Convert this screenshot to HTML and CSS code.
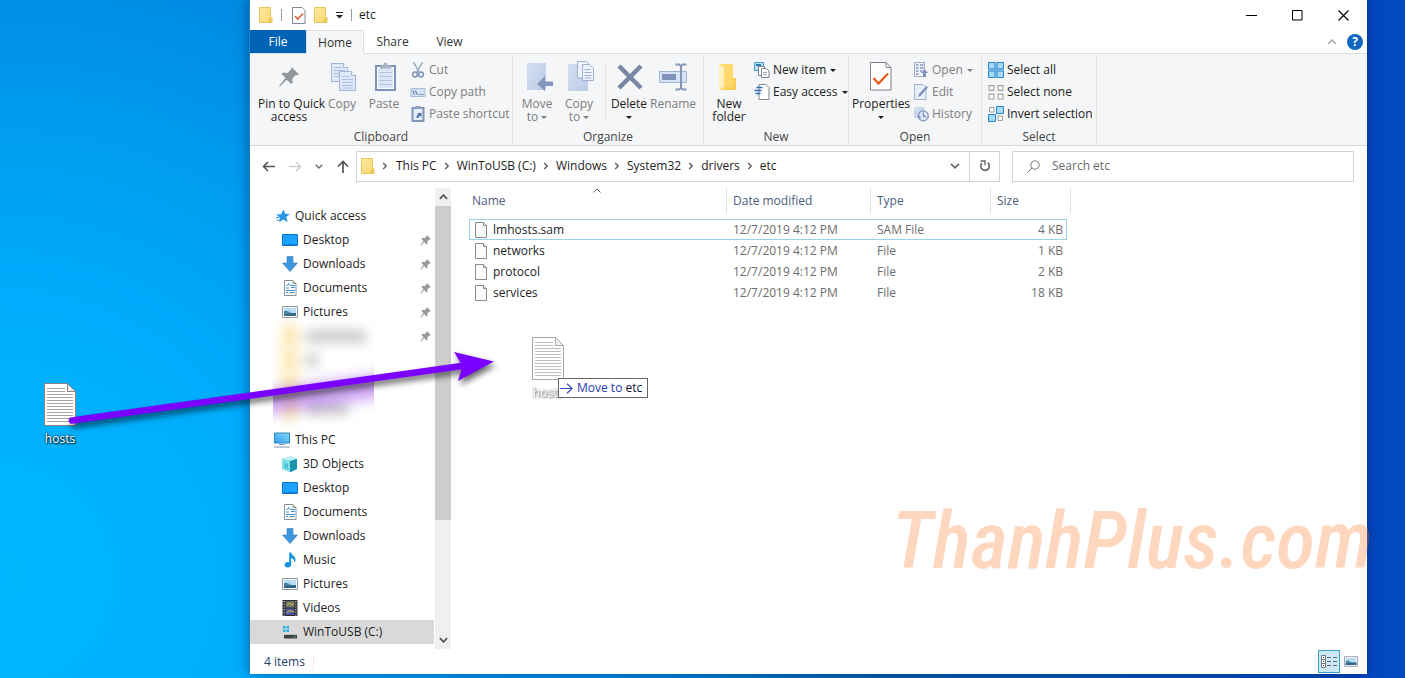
FILE: index.html
```html
<!DOCTYPE html>
<html lang="en">
<head>
<meta charset="utf-8">
<title>etc</title>
<meta name="viewport" content="width=device-width, initial-scale=1">
<link rel="stylesheet" href="styles.css">
</head>
<body>
<svg class="defs" aria-hidden="true">
  <defs>
    <linearGradient id="gFolder" x1="0" y1="0" x2="1" y2="1"><stop offset="0" stop-color="#ffeaa5"/><stop offset="1" stop-color="#fbd768"/></linearGradient>
    <linearGradient id="gBlue" x1="0" y1="0" x2="1" y2="1"><stop offset="0" stop-color="#1a9cff"/><stop offset="1" stop-color="#1aa8ff"/></linearGradient>
    <linearGradient id="gPale" x1="0" y1="0" x2="1" y2="1"><stop offset="0" stop-color="#d3dff2"/><stop offset="1" stop-color="#bccce6"/></linearGradient>
    <linearGradient id="gScreen" x1="0" y1="1" x2="1" y2="0"><stop offset="0" stop-color="#2f9fe8"/><stop offset="1" stop-color="#86dbfb"/></linearGradient>
  </defs>
  <symbol id="folder" viewBox="0 0 14 16"><path d="M.5.5h11v10h1.500v5H.5z" fill="url(#gFolder)" stroke="#e9c75f"/><path d="M11 11.500v4" stroke="#d9ae3c"/></symbol>
  <symbol id="pin" viewBox="0 0 20 20"><path d="M12.500 0 20 7.500l-2 .8-1-.6-3.600 3.800.2 4.300-1.500 1.300-4.300-4.300L1 19.600l-1-.4L6.500 11 2.600 7l1.400-1.400 4.500.3 3.700-3.600z" fill="#8f979c"/></symbol>
  <symbol id="page" viewBox="0 0 12 16"><path d="M.5.500h8l3 3v12H.5z" fill="#fbfbfb" stroke="#868b90"/><path d="M8.500.500v3h3" fill="#e6e6e6" stroke="#868b90"/></symbol>
  <symbol id="notes" viewBox="0 0 32 43"><path d="M.5.500h23l8 8v34H.5z" fill="#fff" stroke="#8d7f7a"/><path d="M23.500.500v8h8z" fill="#e9eef2" stroke="#8d7f7a"/><path d="M3 5.500h18M3 8.500h18M3 11.500h26M3 14.500h26M3 17.500h26M3 20.500h26M3 23.500h26M3 26.500h26M3 29.500h26M3 32.500h26M3 35.500h26M3 38.500h26" stroke="#a2a2a2"/></symbol>
  <symbol id="desktop" viewBox="0 0 16 12"><path d="M.5.500h15v11H.5z" fill="url(#gBlue)" stroke="#1173c7"/><path d="M2 10.500h12" stroke="#0c5ea8" stroke-dasharray="1 1"/></symbol>
  <symbol id="down" viewBox="0 0 16 16"><path d="M5 .5h6V7h4.500L8 15.500.500 7H5z" fill="#3f97de" stroke="#2b7cc0" stroke-width=".6"/></symbol>
  <symbol id="doc" viewBox="0 0 14 16"><path d="M1.500.500h8.500l3 3v12H1.500z" fill="#fff" stroke="#8b949c"/><path d="M10 .5v3h3" fill="none" stroke="#8b949c"/><path d="M3.500 5.500h1l1-2 1 2h1M3 8h3M8 5.500h4M8 7.500h4M3 10.500h9M3 12.500h2M6.500 12.500h5" stroke="#3e8fc7" fill="none"/></symbol>
  <symbol id="pics" viewBox="0 0 16 12"><path d="M.5.500h15v11H.5z" fill="#fff" stroke="#8b949c"/><path d="M2 2h12v8H2z" fill="#b5def5"/><path d="M2 5c3-1 5 1 7 2l5 0v3H2z" fill="#4d86a3"/><path d="M2 8l12-1v3H2z" fill="#2f6687"/></symbol>
  <symbol id="star" viewBox="0 0 14 14"><path d="M7.500.500 9.200 4.800 13.800 5 10.300 8l1.500 5-4.500-2.500L3 13.300l1-4.600L0 5.600l5-.4z" fill="#2a96e8"/><path d="M0 8.500h3M.5 11h3" stroke="#2a96e8"/></symbol>
  <symbol id="pc" viewBox="0 0 16 15"><path d="M.5.500h15v10H.5z" fill="url(#gScreen)" stroke="#3186bd"/><path d="M5 12h6M0 14.500h16" stroke="#7d9bb0"/></symbol>
  <symbol id="cube" viewBox="0 0 16 16"><path d="M0 3 9 .5l6 2.500v10l-6 3-9-3z" fill="#2fb4c9"/><path d="M0 3l8 2v11l-8-3z" fill="#7de0e8"/><path d="M0 3 9 .5l6 2.500-7 2z" fill="#bff3f5"/><path d="M8 5l7-2v10l-7 3z" fill="#1c93ad"/><path d="M2.500 7 6 8v5l-3.500-1z" fill="#4bc6d6"/></symbol>
  <symbol id="music" viewBox="0 0 12 16"><path d="M5.200.500h2c.3 3 4.300 3.500 4.300 7 0 1.500-.6 2.500-1.300 3.300.4-2.800-1-4.300-3-4.800v6.500c0 2-1.600 3-3.500 3-2 0-3.200-1.300-3.200-2.700 0-1.700 1.600-2.800 3.400-2.800.5 0 1 .1 1.300.2z" fill="#1393dd"/></symbol>
  <symbol id="video" viewBox="0 0 14 15"><path d="M0 0h14v15H0z" fill="#2d2d33"/><path d="M1.500 1v14M12.500 1v14" stroke="#e8e8e8" stroke-dasharray="1 1.500"/><path d="M3 1h8v6H3z" fill="#6b7a6c"/><path d="M3 8h8v6H3z" fill="#4e5aa0"/><path d="M4 5l3-2 2 2 2-2M4 12l3-2 4 1" stroke="#c9b04c" fill="none"/></symbol>
  <symbol id="drive" viewBox="0 0 16 14"><path d="M1 1h2.500v2.500H1zM4.500 1H7v2.500H4.500zM1 4.500h2.500V7H1zM4.500 4.500H7V7H4.500z" fill="#27b0ec"/><path d="M3 9h11l1 1H2z" fill="#b8bdc0"/><path d="M2 10h13v3.500H2z" fill="#3c4144"/><path d="M11.500 12h2" stroke="#57d46e"/></symbol>
  <symbol id="chev" viewBox="0 0 6 8"><path d="M1.200 1l3 3-3 3" fill="none" stroke="#5c5c5c" stroke-width="1.400"/></symbol>
  <symbol id="vdown" viewBox="0 0 10 6"><path d="M1 .8l4 4 4-4" fill="none" stroke="currentColor" stroke-width="1.700"/></symbol>
  <symbol id="tri" viewBox="0 0 6 3"><path d="M0 0h6L3 3z" fill="currentColor"/></symbol>
  <symbol id="check" viewBox="0 0 14 17"><path d="M.5.500h9.500l3 3v13H.5z" fill="#fff" stroke="#7b8794"/><path d="M3 9l2.800 3L11 6.500" fill="none" stroke="#dd6237" stroke-width="1.600"/></symbol>
  <symbol id="bigcheck" viewBox="0 0 22 29"><path d="M.5.500h15.500l5 5v22.500H.5z" fill="#fff" stroke="#7a8088"/><path d="M16 .5v5h5" fill="none" stroke="#7a8088"/><path d="M3.500 16l5 5.500L18 11.500" fill="none" stroke="#e0601c" stroke-width="2.400"/></symbol>
  <symbol id="copy" viewBox="0 0 25 29"><g fill="#dfe9f7" stroke="#9fb4d6"><path d="M.5.500h12l4 4v14H.5z"/><path d="M8.500 8.500h12l4 4v15H8.500z"/><path d="M20.500 8.500v4h4" fill="#fff"/><path d="M12.500.500v4h4" fill="#fff"/></g><path d="M3 4.500h8M3 7.500h11M3 10.500h5M3 13.500h5M11 13.500h8M11 16.500h11M11 19.500h11M11 22.500h11M11 25h11" stroke="#a9bfe0"/></symbol>
  <symbol id="paste" viewBox="0 0 21 29"><path d="M1 4h19v24H1z" fill="#fff" stroke="#7d93bc" stroke-width="2"/><path d="M3 6h15v20H3z" fill="#dbe6f6"/><path d="M4 10.500h13M4 14.500h13M4 18.500h13M4 22.500h13" stroke="#b3c6e4"/><path d="M5 6.500V3.500h3.500C8.500 1.500 9 .5 10.500.500s2 1 2 3H16v3z" fill="#a9b2c2"/></symbol>
  <symbol id="cut" viewBox="0 0 13 16"><path d="M2 0l5.500 10M11 0 5.500 10" stroke="#9aa9c4" stroke-width="1.500"/><circle cx="3.500" cy="12.500" r="2.400" fill="none" stroke="#7f93b8" stroke-width="1.500"/><circle cx="9.500" cy="12.500" r="2.400" fill="none" stroke="#7f93b8" stroke-width="1.500"/></symbol>
  <symbol id="path" viewBox="0 0 15 9"><path d="M.5.500h14v8H.5z" fill="#d3e1f5" stroke="#a8bcdb"/><path d="M2.500 2.500l1.500 4M5 2.500l1.500 4M8 6.500h1M10 6.500h1M12 6.500h1" stroke="#52699b"/></symbol>
  <symbol id="short" viewBox="0 0 13 16"><path d="M1 2h11v13H1z" fill="#e5edf9" stroke="#8295bd" stroke-width="2"/><path d="M4 0h5v3H4z" fill="#8fa0be"/><path d="M5 12c0-2 .5-3 2-3.500L6 7h4v4L8.800 9.800C7.500 10.500 7 11 7 12z" fill="#516da5"/></symbol>
  <symbol id="move" viewBox="0 0 27 29"><path d="M1 1h19v27H1z" fill="url(#gPale)"/><path d="M27 19.500h-8V14l-8 8 8 7v-5h8z" fill="#8296bd"/></symbol>
  <symbol id="copyto" viewBox="0 0 26 31"><path d="M0 3h20v27H0z" fill="url(#gPale)"/><g fill="#eef3fb" stroke="#9db0d0"><path d="M9.500.500h9l2.500 2.500v14h-11.500z"/><path d="M14.500 3.500h7l4 4v12h-11z"/></g><path d="M16.500 8.500h6M16.500 11.500h7M16.500 14.500h7M16.500 17h7" stroke="#9db0d0"/></symbol>
  <symbol id="del" viewBox="0 0 26 26"><path d="M2 2l22 22M24 2 2 24" stroke="#7786a3" stroke-width="4.500"/></symbol>
  <symbol id="rename" viewBox="0 0 29 28"><path d="M.5 8.500h27v11H.5z" fill="#d7e3f5" stroke="#9fb3d5"/><path d="M3 11h14v6H3z" fill="#7f93ba"/><path d="M16.500 1.500h3.500l2 1.500 2-1.500h3.500M22 3v22M16.500 26.500h3.500l2-1.500 2 1.500h3.500" fill="none" stroke="#8496b8" stroke-width="2"/></symbol>
  <symbol id="newf" viewBox="0 0 19 28"><path d="M1 1h14v14h3v12H1z" fill="#ffd96b"/><path d="M1 1l5 3v20l-5 3z" fill="#fff0bd"/><path d="M15 15h3v12H6v-3h9z" fill="#fbcf55"/></symbol>
  <symbol id="newi" viewBox="0 0 16 16"><path d="M.5.500h9v8h-9z" fill="#bfe2f7" stroke="#3d9ad1"/><path d="M2 3h5" stroke="#2679b5" stroke-width="2"/><g fill="#fff" stroke="#7a8490"><path d="M4.500 4.500h6v9h-6z"/><path d="M7.500 6.500h5l2.500 2.500v6.500H7.500z"/></g><path d="M9 10.500h4M9 12.500h4" stroke="#9aa3ad"/></symbol>
  <symbol id="easy" viewBox="0 0 15 16"><path d="M4.500.500h7l3 3v12h-10z" fill="#fff" stroke="#7f8891"/><path d="M2 3.500h6M0 6.500h7M1 9.500h5" stroke="#2d6fb0" stroke-width="1.300"/></symbol>
  <symbol id="open" viewBox="0 0 14 16"><path d="M.5.500h10v14H.5z" fill="#edf2fa" stroke="#a0adc6"/><path d="M2 3h2.500M2 6h2.500M2 9h2.500M2 12h2.500M6 3h3.500M6 6h3.500M6 9h2" stroke="#8396bb" stroke-width="1.700"/><path d="M9 15v-4H7l3.500-4 3.500 4h-2v4z" fill="#7f94bd"/></symbol>
  <symbol id="edit" viewBox="0 0 14 16"><path d="M.5.500h8.500l3 3v12H.5z" fill="#e6eefa" stroke="#9fb1d0"/><path d="M4 13l1-3 7.500-8 1.500 1.500L6.500 12z" fill="#7c90b6"/></symbol>
  <symbol id="hist" viewBox="0 0 17 16"><path d="M1 .5h11v12H1z" fill="url(#gPale)"/><circle cx="11" cy="10" r="5.300" fill="#dee8f6" stroke="#8396ba" stroke-width="1.300"/><path d="M11 6.500V10l3 1M6 10l2 2" stroke="#6f83ab" fill="none" stroke-width="1.300"/></symbol>
  <symbol id="selall" viewBox="0 0 16 16"><path d="M.5.500h6.500v6.500H.5zM9 .5h6.500v6.500H9zM.5 9h6.500v6.500H.5zM9 9h6.500v6.500H9z" fill="#a5daf8" stroke="#2385c8"/><path d="M8 0v16M0 8h16" stroke="#3f9bd6"/></symbol>
  <symbol id="selnone" viewBox="0 0 15 15"><path d="M1 1.500h4.500V6H1zM9.500 1.500H14V6H9.500zM1 9.500h4.500V14H1zM9.500 9.500H14V14H9.500z" fill="#fff" stroke="#a0a0a0"/></symbol>
  <symbol id="selinv" viewBox="0 0 16 16"><path d="M1.500 1.500h4.500V6H1.500zM10 10h4.500v4.500H10z" fill="#fff" stroke="#a0a0a0"/><path d="M8.500.500h7v7h-7zM.5 8.500h7v7h-7z" fill="#a5daf8" stroke="#2385c8"/></symbol>
</svg>

<main class="screen">
  <section class="window" aria-label="etc">
    <header class="titlebar">
      <svg class="i14x16"><use href="#folder"/></svg>
      <span class="bar"></span>
      <button class="plain" aria-label="Properties"><svg class="i14x17"><use href="#check"/></svg></button>
      <button class="plain" aria-label="New folder"><svg class="i14x16"><use href="#folder"/></svg></button>
      <button class="plain qat" aria-label="Customize toolbar"><svg width="7" height="7" viewBox="0 0 7 7"><path d="M0 .5h7" stroke="#222"/><path d="M0 3h7L3.500 6.500z" fill="#222"/></svg></button>
      <span class="bar bar-dark"></span>
      <h1 class="title">etc</h1>
      <div class="controls">
        <button class="plain" aria-label="Minimize"><svg width="11" height="11" viewBox="0 0 11 11"><path d="M0 5.500h11" stroke="#000"/></svg></button>
        <button class="plain" aria-label="Maximize"><svg width="11" height="11" viewBox="0 0 11 11"><path d="M.5.500h9.500v9.500H.5z" fill="none" stroke="#000"/></svg></button>
        <button class="plain" aria-label="Close"><svg width="11" height="11" viewBox="0 0 11 11"><path d="M.5.500l10 10M10.500.500l-10 10" stroke="#000" stroke-width="1.200"/></svg></button>
      </div>
    </header>

    <nav class="tabs">
      <button class="tab tab-file">File</button>
      <button class="tab tab-active">Home</button>
      <button class="tab">Share</button>
      <button class="tab">View</button>
      <span class="tabs-end">
        <button class="plain" aria-label="Collapse ribbon"><svg width="10" height="6" viewBox="0 0 10 6"><path d="M1 5l4-4 4 4" fill="none" stroke="#a0a0a0" stroke-width="1.300"/></svg></button>
        <button class="help" aria-label="Help">?</button>
      </span>
    </nav>

    <div class="ribbon">
      <section class="group g-clip">
        <div class="tools">
          <button class="big b-pin"><svg class="pic" viewBox="0 0 32 32"><use href="#pin" x="6" y="6" width="20" height="20"/></svg>Pin to Quick<br>access</button>
          <button class="big b-44 off"><svg class="pic" viewBox="0 0 32 32"><use href="#copy" x="5" y="2" width="25" height="29"/></svg>Copy</button>
          <button class="big b-40 off"><svg class="pic" viewBox="0 0 32 32"><use href="#paste" x="7" y="1" width="21" height="29"/></svg>Paste</button>
          <div class="list">
            <button class="small off"><svg class="ic"><use href="#cut"/></svg>Cut</button>
            <button class="small off"><svg class="ic ic-path"><use href="#path"/></svg>Copy path</button>
            <button class="small off"><svg class="ic"><use href="#short"/></svg>Paste shortcut</button>
          </div>
        </div>
        <h2 class="caption">Clipboard</h2>
      </section>
      <section class="group g-org">
        <div class="tools">
          <button class="big b-42 off"><svg class="pic" viewBox="0 0 32 32"><use href="#move" x="5" y="1" width="27" height="29"/></svg>Move<br>to <svg class="tri"><use href="#tri"/></svg></button>
          <button class="big b-42 off"><svg class="pic" viewBox="0 0 32 32"><use href="#copyto" x="5" y="0" width="26" height="31"/></svg>Copy<br>to <svg class="tri"><use href="#tri"/></svg></button>
          <span class="split"></span>
          <button class="big b-42"><svg class="pic" viewBox="0 0 32 32"><use href="#del" x="4" y="3" width="26" height="26"/></svg>Delete<br><svg class="tri"><use href="#tri"/></svg></button>
          <button class="big b-46 off"><svg class="pic" viewBox="0 0 32 32"><use href="#rename" x="2" y="2" width="29" height="28"/></svg>Rename</button>
        </div>
        <h2 class="caption">Organize</h2>
      </section>
      <section class="group g-new">
        <div class="tools">
          <button class="big b-44"><svg class="pic" viewBox="0 0 32 32"><use href="#newf" x="5" y="2" width="19" height="28"/></svg>New<br>folder</button>
          <div class="list">
            <button class="small"><svg class="ic"><use href="#newi"/></svg>New item <svg class="tri"><use href="#tri"/></svg></button>
            <button class="small"><svg class="ic"><use href="#easy"/></svg>Easy access <svg class="tri"><use href="#tri"/></svg></button>
          </div>
        </div>
        <h2 class="caption">New</h2>
      </section>
      <section class="group g-open">
        <div class="tools">
          <button class="big b-58"><svg class="pic" viewBox="0 0 32 32"><use href="#bigcheck" x="5" y="1" width="22" height="29"/></svg>Properties<br><svg class="tri"><use href="#tri"/></svg></button>
          <div class="list">
            <button class="small off"><svg class="ic"><use href="#open"/></svg>Open <svg class="tri"><use href="#tri"/></svg></button>
            <button class="small off"><svg class="ic"><use href="#edit"/></svg>Edit</button>
            <button class="small off"><svg class="ic"><use href="#hist"/></svg>History</button>
          </div>
        </div>
        <h2 class="caption">Open</h2>
      </section>
      <section class="group g-sel">
        <div class="tools">
          <div class="list">
            <button class="small"><svg class="ic"><use href="#selall"/></svg>Select all</button>
            <button class="small"><svg class="ic"><use href="#selnone"/></svg>Select none</button>
            <button class="small"><svg class="ic"><use href="#selinv"/></svg>Invert selection</button>
          </div>
        </div>
        <h2 class="caption">Select</h2>
      </section>
    </div>

    <div class="address-row">
      <div class="history">
        <button class="plain" aria-label="Back"><svg width="13" height="11" viewBox="0 0 13 11"><path d="M13 5.500H1.500M6 1 1.500 5.500 6 10" fill="none" stroke="#555" stroke-width="1.600"/></svg></button>
        <button class="plain" aria-label="Forward"><svg width="13" height="11" viewBox="0 0 13 11"><path d="M0 5.500h11.500M7 1l4.500 4.500L7 10" fill="none" stroke="#cfcfcf" stroke-width="1.600"/></svg></button>
        <button class="plain" aria-label="Recent"><svg width="8" height="5" viewBox="0 0 10 6" color="#666"><use href="#vdown"/></svg></button>
        <button class="plain" aria-label="Up"><svg width="12" height="13" viewBox="0 0 12 13"><path d="M6 13V1.500M1 6.500l5-5 5 5" fill="none" stroke="#555" stroke-width="1.700"/></svg></button>
      </div>
      <div class="address">
        <svg class="i14x16"><use href="#folder"/></svg>
        <svg class="chev chev-first"><use href="#chev"/></svg><a class="crumb" href="#">This PC</a>
        <svg class="chev"><use href="#chev"/></svg><a class="crumb" href="#">WinToUSB (C:)</a>
        <svg class="chev"><use href="#chev"/></svg><a class="crumb" href="#">Windows</a>
        <svg class="chev"><use href="#chev"/></svg><a class="crumb" href="#">System32</a>
        <svg class="chev"><use href="#chev"/></svg><a class="crumb" href="#">drivers</a>
        <svg class="chev"><use href="#chev"/></svg><a class="crumb" href="#">etc</a>
        <button class="plain drop" aria-label="Previous locations"><svg width="10" height="6" color="#666"><use href="#vdown"/></svg></button>
        <button class="plain refresh" aria-label="Refresh"><svg width="12" height="12" viewBox="0 0 12 12"><path d="M3 3A4.300 4.300 0 1 0 8.700 2.700" fill="none" stroke="#666" stroke-width="1.600"/><path d="M1.500 1H6v4.300" fill="none" stroke="#666" stroke-width="1.400"/></svg></button>
      </div>
      <label class="search">
        <svg width="13" height="13" viewBox="0 0 13 13"><circle cx="8" cy="5" r="4.200" fill="none" stroke="#777"/><path d="M5 8 .5 12.500" stroke="#777"/></svg>
        <input type="text" placeholder="Search etc" aria-label="Search etc">
      </label>
    </div>

    <div class="body">
      <nav class="tree">
        <a class="node root" href="#"><svg class="t14"><use href="#star"/></svg>Quick access</a>
        <a class="node" href="#"><svg class="t16"><use href="#desktop"/></svg>Desktop<svg class="mini-pin"><use href="#pin"/></svg></a>
        <a class="node" href="#"><svg class="t16"><use href="#down"/></svg>Downloads<svg class="mini-pin"><use href="#pin"/></svg></a>
        <a class="node" href="#"><svg class="t16"><use href="#doc"/></svg>Documents<svg class="mini-pin"><use href="#pin"/></svg></a>
        <a class="node" href="#"><svg class="t16"><use href="#pics"/></svg>Pictures<svg class="mini-pin"><use href="#pin"/></svg></a>
        <div class="hidden-nodes">
          <span class="smudge"><i class="s-folder"></i><i class="s-text s-long"></i></span>
          <span class="smudge"><i class="s-folder"></i><i class="s-text s-short"></i></span>
          <span class="smudge"><i class="s-folder"></i></span>
          <span class="smudge"><i class="s-folder"></i><i class="s-text s-mid"></i></span>
          <svg class="halo" width="101" height="70" viewBox="0 0 101 70"><path d="M-20 44 120 24" stroke="#8a2be8" stroke-width="22"/></svg>
          <svg class="mini-pin lone-pin"><use href="#pin"/></svg>
        </div>
        <a class="node root" href="#"><svg class="t16"><use href="#pc"/></svg>This PC</a>
        <a class="node" href="#"><svg class="t16"><use href="#cube"/></svg>3D Objects</a>
        <a class="node" href="#"><svg class="t16"><use href="#desktop"/></svg>Desktop</a>
        <a class="node" href="#"><svg class="t16"><use href="#doc"/></svg>Documents</a>
        <a class="node" href="#"><svg class="t16"><use href="#down"/></svg>Downloads</a>
        <a class="node" href="#"><svg class="t16"><use href="#music"/></svg>Music</a>
        <a class="node" href="#"><svg class="t16"><use href="#pics"/></svg>Pictures</a>
        <a class="node" href="#"><svg class="t16"><use href="#video"/></svg>Videos</a>
        <a class="node node-on" href="#"><svg class="t16"><use href="#drive"/></svg>WinToUSB (C:)</a>
      </nav>
      <div class="scroll" aria-hidden="true">
        <svg class="arrow" width="9" height="6" viewBox="0 0 10 6"><path d="M1 5l4-4 4 4" fill="none" stroke="#555" stroke-width="2"/></svg>
        <span class="thumb"></span>
        <svg class="arrow" width="9" height="6" viewBox="0 0 10 6"><path d="M1 1l4 4 4-4" fill="none" stroke="#555" stroke-width="2"/></svg>
      </div>
      <div class="files">
        <table class="table">
          <thead><tr>
            <th class="c-name">Name<svg class="sort" width="8" height="5" viewBox="0 0 8 5"><path d="M.5 4.500 4 1l3.500 3.500" fill="none" stroke="#666"/></svg></th>
            <th class="c-date">Date modified</th><th class="c-type">Type</th><th class="c-size">Size</th>
          </tr></thead>
          <tbody>
            <tr class="focus"><td><svg class="file"><use href="#page"/></svg>lmhosts.sam</td><td>12/7/2019 4:12 PM</td><td>SAM File</td><td>4 KB</td></tr>
            <tr><td><svg class="file"><use href="#page"/></svg>networks</td><td>12/7/2019 4:12 PM</td><td>File</td><td>1 KB</td></tr>
            <tr><td><svg class="file"><use href="#page"/></svg>protocol</td><td>12/7/2019 4:12 PM</td><td>File</td><td>2 KB</td></tr>
            <tr><td><svg class="file"><use href="#page"/></svg>services</td><td>12/7/2019 4:12 PM</td><td>File</td><td>18 KB</td></tr>
          </tbody>
        </table>
      </div>
    </div>

    <footer class="status">
      <span class="count">4 items</span>
      <span class="views">
        <button class="plain view view-on" aria-label="Details"><svg width="16" height="13" viewBox="0 0 16 13"><path d="M.5.500h4v12h-4zM.5 4.500h4M.5 8.500h4" fill="#fff" stroke="#777"/><path d="M2 2.500h1M2 6.500h1M2 10.500h1" stroke="#333"/><path d="M6 2.500h4M12 2.500h4M6 6.500h4M12 6.500h4M6 10.500h4M12 10.500h4" stroke="#666"/></svg></button>
        <button class="plain view" aria-label="Large icons"><svg width="14" height="11"><use href="#pics"/></svg></button>
      </span>
    </footer>
  </section>

  <figure class="shortcut on-desktop"><svg width="32" height="43"><use href="#notes"/></svg><figcaption>hosts</figcaption></figure>
  <figure class="shortcut dragged"><svg width="32" height="43"><use href="#notes"/></svg><figcaption>hosts</figcaption></figure>
  <div class="drop-tip"><svg width="13" height="11" viewBox="0 0 13 11"><path d="M0 5.500h12M7 .8l5 4.700-5 4.700" fill="none" stroke="#2f4fc4" stroke-width="1.200"/></svg><span>Move to <b>etc</b></span></div>

  <svg class="pointer" width="520" height="460" viewBox="0 0 520 460" aria-hidden="true">
    <path d="M72 420.500 462 366" stroke="#7a00ff" stroke-width="6.500" stroke-linecap="round"/>
    <path d="M494 361.500 454 352l8.500 14-4.500 15z" fill="#7a00ff"/>
  </svg>
  <div class="watermark">ThanhPlus.com</div>
</main>
</body>
</html>
```
FILE: styles.css
```css
* { box-sizing: border-box; }

body {
  margin: 0;
  font: 12px/16px "Open Sans", "Noto Sans", sans-serif;
  color: #1c1c1c;
}

button, input { font: inherit; color: inherit; }
a { color: inherit; text-decoration: none; }
svg { flex: none; }
.defs { position: absolute; width: 0; height: 0; }

.screen {
  position: relative;
  min-height: 100vh;
  overflow: hidden;
  background:
    linear-gradient(90deg, transparent 95%, #0448c0 97%),
    radial-gradient(circle at 0 85%, #00b8ff 0, #00acfd 280px, #009bf0 460px, #008ae2 620px, transparent 900px),
    linear-gradient(90deg, #0090d8 20%, #0060b0 60%, #0048c0);
}

.window {
  position: absolute;
  top: 0;
  right: 38px;
  bottom: 4px;
  left: 249px;
  display: flex;
  flex-direction: column;
  background: #fff;
  border-left: 1px solid #1883c9;
  box-shadow: 0 0 12px rgba(0, 20, 80, .5);
}

.plain {
  display: flex;
  align-items: center;
  justify-content: center;
  padding: 0;
  border: 0;
  background: none;
}

/* title bar */
.titlebar { display: flex; align-items: center; height: 30px; padding-left: 9px; }
.i14x16 { width: 14px; height: 16px; }
.i14x17 { width: 14px; height: 17px; }
.titlebar > .plain { margin-right: 8px; }
.bar { width: 1px; height: 12px; margin: 0 10px 0 8px; background: #9a9a9a; }
.bar-dark { margin: 0 7px 0 0; }
.title { margin: 0; font-size: 12px; font-weight: 400; }
.controls { display: flex; margin: 0 1px 0 auto; }
.controls .plain { width: 46px; height: 28px; }

/* tabs */
.tabs { display: flex; height: 24px; border-bottom: 1px solid #dcdfe3; }
.tab { min-width: 57px; padding: 0; border: 0; background: none; color: #333; }
.tab-file { min-width: 56px; background: #0063b5; color: #fff; }
.tab-active {
  min-width: 58px;
  margin-bottom: -1px;
  background: #f5f6f7;
  border: solid #dcdfe3;
  border-width: 1px 1px 0;
}
.tabs-end { display: flex; align-items: center; gap: 10px; margin-left: auto; padding-right: 4px; }
.help {
  width: 16px;
  height: 16px;
  padding: 0;
  border: 0;
  border-radius: 50%;
  background: #0f68bd;
  color: #fff;
  font-weight: 700;
  line-height: 16px;
}

/* ribbon */
.ribbon { display: flex; height: 92px; background: #f5f6f7; border-bottom: 1px solid #d5d7da; }
.group {
  display: flex;
  flex-direction: column;
  margin: 2px 0;
  padding-top: 2px;
  border-right: 1px solid #e2e3e5;
}
.tools { display: flex; flex: 1; align-items: flex-start; padding-left: 3px; }
.g-clip { min-width: 263px; }
.g-clip .tools { padding-left: 8px; }
.g-org { min-width: 191px; }
.g-new { min-width: 145px; }
.g-open { min-width: 133px; }
.g-sel { min-width: 115px; }
.big {
  padding: 3px 0 0;
  border: 0;
  background: none;
  text-align: center;
  line-height: 13px;
  white-space: nowrap;
}
.pic { display: block; width: 32px; height: 32px; margin: 0 auto 4px; }
.b-pin { width: 62px; }
.b-40 { width: 40px; }
.b-42 { width: 42px; }
.b-44 { width: 44px; }
.b-46 { width: 46px; }
.b-58 { width: 58px; }
.off { color: #7d7d7d; }
.split { width: 1px; height: 56px; margin: 4px 2px 0 5px; background: #e0e1e3; }
.list { display: flex; flex-direction: column; padding-top: 1px; margin-left: 3px; }
.g-clip .list { margin-left: 6px; }
.small {
  display: flex;
  align-items: center;
  height: 22px;
  padding: 0;
  border: 0;
  background: none;
  white-space: nowrap;
}
.ic { width: 16px; height: 16px; margin-right: 3px; }
.ic-path { height: 9px; }
.tri { width: 6px; height: 3px; margin-left: 4px; vertical-align: middle; }
.big .tri { margin-left: 0; }
.caption { margin: 0; font-size: 12px; font-weight: 400; text-align: center; color: #444; line-height: 13px; }

/* address row */
.address-row { display: flex; align-items: center; height: 41px; padding: 0 13px 1px 12px; }
.history { display: flex; align-items: center; justify-content: space-between; width: 87px; margin-right: 7px; }
.address { display: flex; flex: 638 1 0; align-items: center; height: 31px; padding-left: 4px; border: 1px solid #d4d4d4; }
.chev { width: 6px; height: 8px; margin: 0 7px; }
.chev-first { margin-right: 8px; }
.drop { width: 28px; height: 100%; margin-left: auto; }
.refresh { width: 30px; height: 100%; border-left: 1px solid #d4d4d4; }
.search {
  display: flex;
  flex: 326 1 0;
  align-items: center;
  gap: 12px;
  height: 31px;
  margin-left: 12px;
  padding-left: 14px;
  border: 1px solid #d4d4d4;
}
.search input { flex: 1; min-width: 0; padding: 0; border: 0; outline: 0; background: none; }
.search input::placeholder { color: #6a6a6a; opacity: 1; }

/* navigation tree */
.body { display: flex; flex: 1; min-height: 0; }
.tree { width: 185px; padding-top: 17px; border-right: 1px solid #fff; }
.node { display: flex; align-items: center; height: 24px; padding: 0 3px 0 32px; white-space: nowrap; }
.root { padding-left: 24px; }
.t16 { width: 16px; height: 16px; margin-right: 5px; }
.t14 { width: 14px; height: 14px; margin: 0 5px 0 2px; }
.node-on { background: #d9d9d9; }
.mini-pin { width: 11px; height: 11px; margin-left: auto; }
.hidden-nodes { position: relative; margin-bottom: 8px; }
.smudge { display: flex; align-items: center; gap: 8px; height: 24px; padding-left: 32px; filter: blur(6px); }
.s-folder { width: 16px; height: 24px; background: #fbe9b4; }
.s-text { height: 13px; background: #cbcbcb; }
.s-long { width: 60px; }
.s-short { width: 12px; }
.s-mid { width: 42px; }
.halo { position: absolute; top: 36px; left: 23px; overflow: hidden; opacity: .45; }
.halo path { filter: blur(7px); }
.lone-pin { position: absolute; top: 7px; right: 3px; }

.scroll { display: flex; flex-direction: column; align-items: center; width: 16px; margin-top: 1px; background: #f0f0f0; }
.arrow { margin: 6px 0; }
.thumb { width: 100%; height: 314px; margin-bottom: auto; background: #cdcdcd; }

/* file list */
.files { flex: 1; padding-left: 18px; }
.table { width: 598px; table-layout: fixed; border-collapse: separate; border-spacing: 0; }
.table th { position: relative; height: 27px; padding: 0 0 0 6px; text-align: left; font-weight: 400; color: #4c607a; border-right: 1px solid #e5e5e5; }
.table .c-name { width: 258px; padding-left: 3px; }
.c-date { width: 144px; }
.c-type { width: 120px; }
.table .c-size { border-right: 0; }
.c-size::after { content: ""; position: absolute; top: 0; right: -4px; width: 1px; height: 27px; background: #e5e5e5; }
.sort { position: absolute; top: 1px; left: 124px; }
.table tbody::before { content: ""; display: block; height: 5px; }
.table td { height: 21px; padding: 0 0 0 6px; color: #6d6d6d; line-height: 16px; }
.table td:first-child { color: #1c1c1c; }
.table td:last-child { padding-right: 4px; text-align: right; }
.focus { outline: 1px solid #99d1f0; outline-offset: -1px; }
.file { width: 12px; height: 16px; margin-right: 6px; vertical-align: top; }

/* status bar */
.status { display: flex; align-items: center; height: 25px; padding: 0 5px 0 14px; color: #26426b; }
.count { padding-right: 8px; border-right: 1px solid #ececec; }
.views { display: flex; margin-left: auto; }
.view { width: 22px; height: 23px; }
.view-on { background: #cce8f6; border: 1px solid #3ba2c4; }

/* free items on the desktop */
.shortcut { position: absolute; display: flex; flex-direction: column; align-items: center; gap: 5px; width: 60px; margin: 0; color: #fff; text-shadow: 1px 1px 2px #000, 0 0 2px #000; }
.on-desktop { top: 383px; left: 30px; }
.dragged { top: 337px; left: 518px; opacity: .7; text-shadow: 1px 1px 2px #333, 0 0 2px #555; }
.drop-tip {
  position: absolute;
  top: 378px;
  left: 558px;
  display: flex;
  align-items: center;
  gap: 4px;
  height: 20px;
  padding: 0 5px 0 1px;
  background: #fff;
  border: 1px solid #666;
  color: #1f3aae;
}
.drop-tip b { font-weight: 400; color: #101040; }
.pointer { position: absolute; top: 0; left: 0; pointer-events: none; filter: drop-shadow(2px 4px 3px rgba(0, 0, 0, .6)); }
.watermark {
  position: absolute;
  right: 32px;
  bottom: 97px;
  font: italic 500 80px/80px "Roboto Condensed", "Liberation Sans Narrow", "Liberation Sans", sans-serif;
  color: rgba(255, 120, 40, .3);
  pointer-events: none;
}
```
